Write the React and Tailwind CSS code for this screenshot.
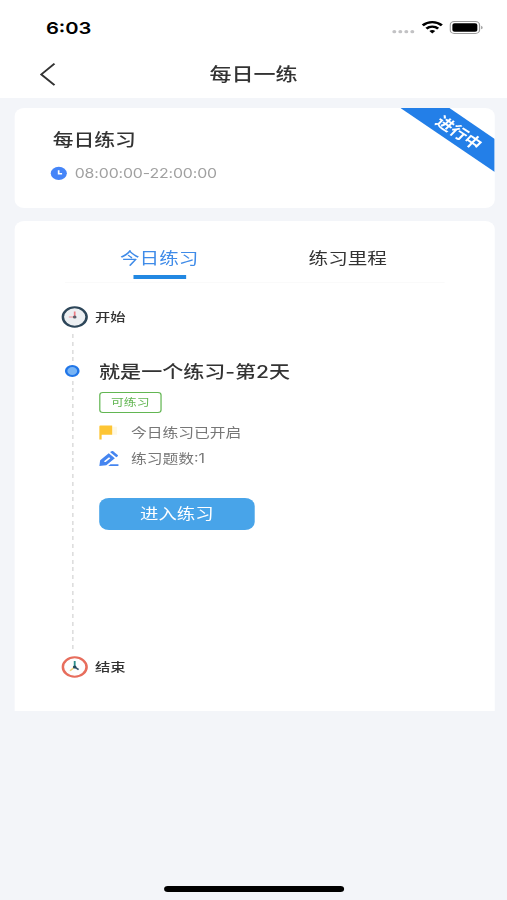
function StatusBar() {
  return (
    <div className="flex h-[50px] items-center justify-between pt-[5px] pl-[37.5px] pr-[19px] text-black">
      <span className="font-['Inter'] text-[16.5px] font-semibold leading-5">6:03</span>
      <div className="flex items-center">
        <svg width="19" height="14" viewBox="0 0 19 14" fill="#c2c2c4" className="mr-[5px]">
          <circle cx="2" cy="10.7" r="1.6" />
          <circle cx="6.9" cy="10.7" r="1.6" />
          <circle cx="11.8" cy="10.7" r="1.6" />
          <circle cx="16.7" cy="10.7" r="1.6" />
        </svg>
        <svg width="18" height="14" viewBox="0 0 18 14" fill="none" stroke="#000" strokeWidth="2.3" className="mr-[5px]">
          <path d="M1.2 4.4a11 11 0 0 1 15.6 0" />
          <path d="M4.2 7.6a6.8 6.8 0 0 1 9.6 0" />
          <path d="M6.6 10.1a3.4 3.4 0 0 1 4.8 0L9 12.6z" fill="#000" stroke="none" />
        </svg>
        <svg width="28" height="14" viewBox="0 0 28 14">
          <rect x="0.6" y="0.5" width="24" height="12" rx="3.4" fill="none" stroke="#9b9b9b" />
          <rect x="2.4" y="2.3" width="20.4" height="8.4" rx="1.8" fill="#000" />
          <path d="M26 4.7v3.6c1.4-.5 1.4-3.1 0-3.6z" fill="#8a8a8a" />
        </svg>
      </div>
    </div>
  );
}

function NavBar() {
  return (
    <div className="grid h-12 grid-cols-[1fr_auto_1fr] items-center">
      <svg width="14" height="24" viewBox="0 0 14 24" fill="none" stroke="#333" strokeWidth="1.7" className="ml-[32px]">
        <path d="M12.5 1.6 1.7 12.4l10.8 10.8" />
      </svg>
      <h1 className="pt-[2px] text-[18px] font-medium leading-6 text-[#333]">每日一练</h1>
    </div>
  );
}

function SummaryCard() {
  return (
    <section className="relative h-[100px] overflow-hidden rounded-lg bg-white pl-[31.5px] pt-[20px]">
      <h2 className="text-[17px] font-medium leading-6 text-[#333]">每日练习</h2>
      <div className="mt-[11px] flex items-center gap-[6px] -ml-[2px]">
        <svg width="14" height="14" viewBox="0 0 14 14">
          <circle cx="7" cy="7.3" r="6.6" fill="#4585f8" />
          <path d="M6.9 4.2v3.6h2.8" fill="none" stroke="#fff" strokeWidth="1.4" />
        </svg>
        <span className="font-['Inter'] text-[13px] leading-5 tracking-[-0.12px] text-[#a0a0a0]">
          08:00:00-22:00:00
        </span>
      </div>
      <div className="absolute right-0 top-0 h-[64px] w-[77px]">
        <svg width="77" height="64" viewBox="0 0 77 64" className="absolute inset-0">
          <path d="M0 0h40L77 31v33z" fill="#237fe8" />
        </svg>
        <span className="absolute left-[26.5px] top-[15px] rotate-[39deg] whitespace-nowrap text-[14.5px] font-bold leading-5 text-white">
          进行中
        </span>
      </div>
    </section>
  );
}

function Tabs() {
  return (
    <div className="mx-[41px] grid h-[62px] grid-cols-2 border-b border-[#fafafa] pt-[25px] text-[16px] leading-6">
      <div className="flex flex-col items-center text-[#3f8be8]">
        <span>今日练习</span>
        <span className="mt-[5px] h-[4px] w-[43px] bg-[#2288e2]" />
      </div>
      <div className="pr-[2px] text-center text-[#333]">练习里程</div>
    </div>
  );
}

function StartClock() {
  return (
    <svg width="22" height="22" viewBox="0 0 22 22">
      <circle cx="11" cy="11" r="9.7" fill="#eceff2" stroke="#2d4659" strokeWidth="2.1" />
      <path d="M11 11V5.4" stroke="#ee7d86" strokeWidth="1.4" />
      <path d="M6.2 11H11" stroke="#ee8d94" strokeWidth="1.2" />
      <circle cx="11" cy="11" r="1.5" fill="#5d5f6b" />
    </svg>
  );
}

function EndClock() {
  return (
    <svg width="22" height="22" viewBox="0 0 22 22">
      <circle cx="11" cy="11" r="9.7" fill="#fdfdfd" stroke="#e76d5c" strokeWidth="2.1" />
      <path d="M11 11V5" stroke="#2b8f8a" strokeWidth="1.5" />
      <path d="m11 11-3.8 3.8" stroke="#f0cf75" strokeWidth="1.3" />
      <path d="m11 11 3.2 2.6" stroke="#35566d" strokeWidth="1.5" />
      <circle cx="11" cy="11" r="1.5" fill="#23495c" />
    </svg>
  );
}

function Exercise() {
  return (
    <div className="pt-[27px]">
      <h3 className="text-[17.2px] font-medium leading-6 text-[#333]">就是一个练习-第2天</h3>
      <div className="mt-[8px] flex h-[21px] w-[51px] items-center justify-center rounded-[3px] border-[1.5px] border-[#62b652] pt-px text-[10.5px] leading-none text-[#62b652]">
        可练习
      </div>
      <div className="mt-[10px] flex h-5 items-center text-[12.9px] text-[#777]">
        <svg width="16" height="16" viewBox="0 0 16 16" className="mr-[10px]">
          <path d="M10 1.8h4.6v8H10z" fill="#fef8e4" />
          <path d="M0 1.5q0-1 1-1h9.6v9.2H2v4.8H0z" fill="#fdc534" />
        </svg>
        今日练习已开启
      </div>
      <div className="mt-[6px] flex h-5 items-center text-[12.9px] text-[#777]">
        <svg width="16" height="16" viewBox="0 0 16 16" className="mr-[10px]" fill="#4585f0">
          <path fillRule="evenodd" d="M7.8 2.2 12.8 7.2 5.8 14.2 0 15.1l.8-5.9zM8 6.2 4.2 10v1.1h1.1L9.1 7.3z" />
          <path d="M9 1.3 10.1.2q.7-.5 1.3 0l3.7 3.7q.5.6 0 1.3L14 6.3z" />
          <path d="M9.2 13.3h6.6v1.8H7.4z" />
        </svg>
        练习题数:1
      </div>
      <button className="mt-[29px] block h-8 w-[127px] rounded-lg bg-[#48a4e9] text-[15px] leading-8 text-white">
        进入练习
      </button>
    </div>
  );
}

function Timeline() {
  return (
    <div className="pl-[38px] pt-[23px]">
      <div className="flex h-[22px] items-center gap-[6px] text-[12.5px] font-medium text-[#333]">
        <StartClock />
        <span className="pt-[2px]">开始</span>
      </div>
      <div className="flex h-[328px]">
        <div className="relative ml-[9.2px] mt-[6px] h-[316px] w-[1.2px] bg-[repeating-linear-gradient(to_bottom,#d3d3d3_0_4px,transparent_4px_7.78px)]">
          <div className="absolute -left-[5.6px] top-[31px] size-[12px] rounded-full border-2 border-[#2176e8] bg-[#78b4f4]" />
        </div>
        <div className="ml-[21px] mt-[5px]">
          <Exercise />
        </div>
      </div>
      <div className="flex h-[22px] items-center gap-[6px] text-[12.5px] font-medium text-[#333]">
        <EndClock />
        <span className="pt-[2px]">结束</span>
      </div>
    </div>
  );
}

export default function App() {
  return (
    <div className="h-[900px] w-[507px] overflow-hidden bg-[#f3f5f9]">
      <div className="flex h-full w-[414px] origin-top-left scale-x-[1.2246] flex-col font-['Inter','Noto_Sans_CJK_SC',sans-serif]">
        <header className="h-[98px] bg-white">
          <StatusBar />
          <NavBar />
        </header>
        <main className="flex flex-1 flex-col gap-[13px] pl-[11.5px] pr-[10.5px] pt-[10px]">
          <SummaryCard />
          <section className="h-[490px] rounded-t-lg bg-white">
            <Tabs />
            <Timeline />
          </section>
        </main>
        <div className="mx-auto mb-[8px] h-[6px] w-[147px] rounded-full bg-black" />
      </div>
    </div>
  );
}
